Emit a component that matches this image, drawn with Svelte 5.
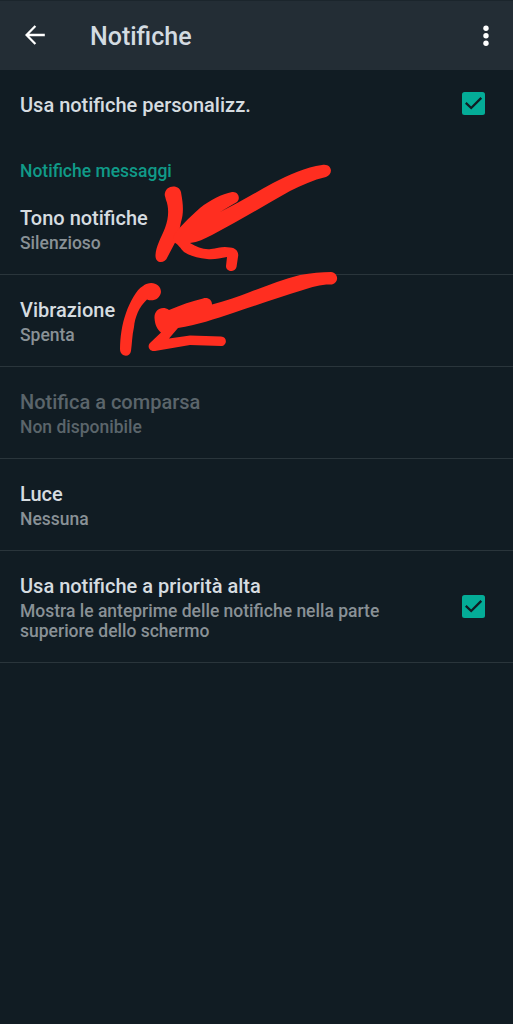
<script lang="ts">
    interface ISetting {
        label: string;
        value: string;
        disabled?: boolean;
        checked?: boolean;
    }

    const settings: ISetting[] = [
        { label: 'Tono notifiche', value: 'Silenzioso' },
        { label: 'Vibrazione', value: 'Spenta' },
        { label: 'Notifica a comparsa', value: 'Non disponibile', disabled: true },
        { label: 'Luce', value: 'Nessuna' },
        {
            label: 'Usa notifiche a priorità alta',
            value: 'Mostra le anteprime delle notifiche nella parte superiore dello schermo',
            checked: true,
        },
    ];
</script>

{#snippet checkbox()}
    <svg class="checkbox" width="23" height="23" viewBox="0 0 23 23">
        <rect width="23" height="23" rx="2.5" />
        <path d="M3.8 10.8 L9.2 16 L19.3 5.9" />
    </svg>
{/snippet}

<div class="screen">
    <header>
        <svg class="back" width="20" height="20" viewBox="0 0 20 20">
            <path d="M19.8 10 H1.7 M10.4 1 L1.5 10 L10.4 19" />
        </svg>
        <h1>Notifiche</h1>
        <svg class="more" width="6" height="22" viewBox="0 0 6 22">
            <circle cx="3" cy="3.2" r="2.7" />
            <circle cx="3" cy="10.7" r="2.7" />
            <circle cx="3" cy="18.2" r="2.7" />
        </svg>
    </header>

    <main>
        <div class="custom">
            <span class="label">Usa notifiche personalizz.</span>
            {@render checkbox()}
        </div>

        <h2>Notifiche messaggi</h2>

        {#each settings as setting}
            <div class="row" class:disabled={setting.disabled}>
                <div class="text">
                    <div class="label">{setting.label}</div>
                    <div class="value">{setting.value}</div>
                </div>
                {#if setting.checked}
                    {@render checkbox()}
                {/if}
            </div>
        {/each}
    </main>

    <svg class="marks" width="513" height="1024" viewBox="0 0 513 1024">
        <path d="M164.7 195 C165 184 181 184 181.3 194 C183 203 184 213 181 222 L178 237 L167.5 257 C165 264 155 264 155.5 255 C156 246 161 238 165 228 C169 218 169 207 166 200 Z" />
        <path d="M173 237 C177 229 190 217 200 208 C210 200 222 194 232 192 C238 191 241 198 237 202 L220 212 C238 203 255 193 273 183 C289 175 306 167 322 165 C332 163 334 174 326 177 C313 180 302 185 290 191 C264 206 238 221 212 235 C204 239 198 242 190 243 C197 247 204 250 211 249 C218 248 223 246 230 247.5 C237 248 239 253 238 257 L236.5 267 C235 273 226 272 226 266 L227 257 C220 258 214 260 207 259 C198 258 190 256 184 252 C180 248 179 245 174 242 Z" />
        <path d="M120 349 C120 337 122 324 126 313 C130 302 136 290 143 286 C151 280 161 284 161 292 C160 299 153 302 147 299.5 C139 307 135 317 134 327 C132 336 132 344 131 351 C130 358 120 357 120 349 Z" />
        <path d="M154.5 318 C154 310 162 305 169 310 C181 305 192 301 203 298.5 C208 297 212 300 212 304.5 C225 301 238 297 250 292 C267 286 283 279 300 275 C311 273 322 272 331 272 C339 273 339 283 332 284.5 C322 284 312 287 303 290 C280 297 257 305 233 313 C215 319 197 325 178 328 L169 338.5 L190 335.5 L221 336.5 C228 337 227 346 221 346 L190 345 L155 351 C149 352 147 346 150 343 L161 332.5 C157 329 155 325 154.5 318 Z" />
    </svg>
</div>

<style>
    :global(body) {
        margin: 0;
        background-color: #111c23;
    }

    .screen {
        position: relative;
        width: 513px;
        height: 1024px;
        overflow: hidden;
        background-color: #111c23;
        font-family: Roboto, sans-serif;
        font-weight: 500;
    }

    header {
        display: flex;
        align-items: center;
        box-sizing: border-box;
        height: 70px;
        padding: 2px 24px 0 25px;
        background-color: #232d35;
        border-top: 1px solid #1b252c;
    }

    h1 {
        flex: 1;
        margin: 0 0 0 45px;
        color: #d3dbe1;
        font-size: 25px;
        font-weight: 500;
        line-height: 30px;
    }

    .back {
        margin-bottom: 3px;

        & path {
            fill: none;
            stroke: #fff;
            stroke-width: 2.3;
        }
    }

    .more {
        margin-bottom: 2px;

        & circle {
            fill: #fff;
        }
    }

    .custom {
        display: flex;
        justify-content: space-between;
        align-items: center;
        height: 66px;
        padding: 2px 28px 0 20px;

        & :global(.checkbox) {
            margin-bottom: 3px;
        }
    }

    h2 {
        margin: 0;
        padding: 23px 20px 2px;
        color: #109a88;
        font-size: 17.5px;
        font-weight: 500;
        line-height: 20px;
    }

    .row {
        display: flex;
        justify-content: space-between;
        align-items: center;
        box-sizing: border-box;
        min-height: 92px;
        padding: 23px 28px 21px 20px;
        border-bottom: 1px solid #2a353b;
    }

    .text {
        width: 390px;
    }

    .label {
        color: #d6dce0;
        font-size: 20px;
        line-height: 24px;
    }

    .value {
        margin-top: 3px;
        color: #899196;
        font-size: 17.5px;
        line-height: 20px;
    }

    .disabled .label,
    .disabled .value {
        color: #5b656b;
    }

    .checkbox {
        flex-shrink: 0;
        margin-bottom: 2px;

        & rect {
            fill: #04ac97;
        }

        & path {
            fill: none;
            stroke: #111c23;
            stroke-width: 2.3;
        }
    }

    /* hand-drawn arrows over the list */
    .marks {
        position: absolute;
        top: 0;
        left: 0;
        fill: #ff2e20;
        pointer-events: none;
    }
</style>
